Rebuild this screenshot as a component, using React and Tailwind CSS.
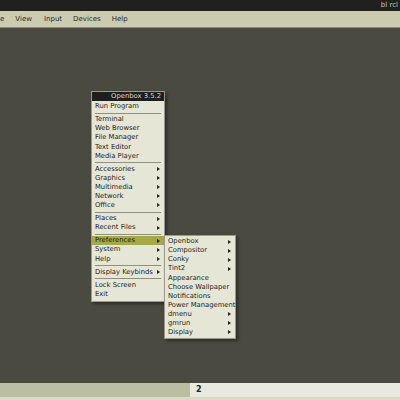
import React from "react";

const font = { fontFamily: '"DejaVu Sans", sans-serif' };

function Item({ label, arrow, active }) {
  return (
    <div
      className={`h-[9.1px] flex items-center justify-between pl-[3px] pr-[4px] ${
        active ? "bg-[#a6a84c]" : ""
      }`}
    >
      <span className="text-[6.8px] leading-none text-[#1c1c1c] whitespace-nowrap">{label}</span>
      {arrow && <span className="w-0 h-0 border-y-[2px] border-y-transparent border-l-[3px] border-l-[#222]" />}
    </div>
  );
}

function Sep() {
  return (
    <div className="h-[4px] flex items-center px-[3px]">
      <div className="h-px w-full bg-[#8f8f84]" />
    </div>
  );
}

const mainMenu = [
  ["Run Program"],
  "sep",
  ["Terminal"],
  ["Web Browser"],
  ["File Manager"],
  ["Text Editor"],
  ["Media Player"],
  "sep",
  ["Accessories", true],
  ["Graphics", true],
  ["Multimedia", true],
  ["Network", true],
  ["Office", true],
  "sep",
  ["Places", true],
  ["Recent Files", true],
  "sep",
  ["Preferences", true, true],
  ["System", true],
  ["Help", true],
  "sep",
  ["Display Keybinds", true],
  "sep",
  ["Lock Screen"],
  ["Exit"],
];

const prefMenu = [
  ["Openbox", true],
  ["Compositor", true],
  ["Conky", true],
  ["Tint2", true],
  ["Appearance"],
  ["Choose Wallpaper"],
  ["Notifications"],
  ["Power Management"],
  ["dmenu", true],
  ["gmrun", true],
  ["Display", true],
];

export default function App() {
  return (
    <div className="w-[400px] h-[400px] flex flex-col bg-[#4a4a40] overflow-hidden" style={font}>
      {/* window title */}
      <div className="h-[11px] bg-[#20201c] flex items-center justify-end pr-[2px]">
        <span className="text-[7px] leading-none text-[#c8c8c0]">bl rcl</span>
      </div>
      {/* vm menu bar */}
      <div className="h-[17px] bg-[#cbcbaf] border-b border-[#8c8c78] flex items-center text-[7px] text-[#2a2a24]">
        <span className="ml-[0px]">e</span>
        <span className="ml-[11px]">View</span>
        <span className="ml-[12px]">Input</span>
        <span className="ml-[11px]">Devices</span>
        <span className="ml-[11px]">Help</span>
      </div>
      {/* desktop */}
      <div className="relative flex-1">
        <div className="absolute left-[91px] top-[63px] w-[74px] bg-[#e6e6d6] border border-[#9a9a8e] shadow-[2px_2px_3px_rgba(0,0,0,0.4)]">
          <div className="h-[9px] bg-[#1e1e1e] flex items-center justify-end pr-[3px]">
            <span className="text-[6.8px] leading-none text-[#d8d8d0]">Openbox 3.5.2</span>
          </div>
          <div className="pb-[2px] pt-[1px]">
            {mainMenu.map((m, i) =>
              m === "sep" ? <Sep key={i} /> : <Item key={i} label={m[0]} arrow={m[1]} active={m[2]} />
            )}
          </div>
        </div>
        <div className="absolute left-[164px] top-[207px] w-[72px] bg-[#e6e6d6] border border-[#9a9a8e] shadow-[2px_2px_3px_rgba(0,0,0,0.4)] py-[1px]">
          {prefMenu.map((m, i) => (
            <Item key={i} label={m[0]} arrow={m[1]} />
          ))}
        </div>
      </div>
      {/* bottom panel */}
      <div className="h-[14px] flex">
        <div className="w-[190px] bg-[#bcbea2]" />
        <div className="flex-1 bg-[#e9eadf] flex items-center pl-[6px]">
          <span className="text-[8px] font-bold leading-none text-[#222]">2</span>
        </div>
      </div>
      <div className="h-[3px] bg-[#d9dac8]" />
    </div>
  );
}
